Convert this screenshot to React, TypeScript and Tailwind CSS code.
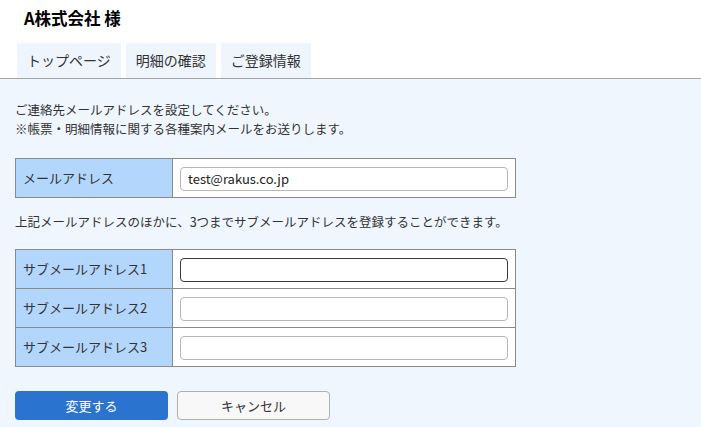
import { type ReactNode } from "react";

const font = { fontFamily: '"Noto Sans CJK JP", "Noto Sans", sans-serif' };

const tabs = ["トップページ", "明細の確認", "ご登録情報"];

const Row = ({ label, children, first }: { label: string; children: ReactNode; first?: boolean }) => (
  <tr className={first ? "" : "border-t border-[#8a8a8a]"}>
    <th className="w-[157px] bg-[#b3d6fc] border-r border-[#8a8a8a] text-left font-normal pl-[7px] text-[13px] text-[#333]">
      {label}
    </th>
    <td className="bg-white px-[7px] h-[39px]">{children}</td>
  </tr>
);

const Input = ({ value, focused }: { value?: string; focused?: boolean }) => (
  <input
    defaultValue={value}
    className={`w-full h-[24px] rounded-[4px] bg-white px-[7px] text-[13px] text-[#222] outline-none border ${
      focused ? "border-[#3a3a3a]" : "border-[#b8b8b8]"
    }`}
  />
);

export default function App() {
  return (
    <div className="w-[701px] h-[427px] bg-white overflow-hidden text-[#333]" style={font}>
      <div className="h-[43px] pl-[24px] pt-[6px] text-[16.5px] font-bold text-black">A株式会社 様</div>
      <div className="flex gap-[5px] pl-[17px] border-b border-[#a3a3a3]">
        {tabs.map((t) => (
          <div key={t} className="h-[35px] px-[10px] flex items-center bg-[#eef5fd] text-[14px] text-[#333]">
            {t}
          </div>
        ))}
      </div>
      <div className="bg-[#eff6fe] h-full px-[15px] pt-[21px]">
        <p className="text-[12.5px] leading-[19px]">ご連絡先メールアドレスを設定してください。</p>
        <p className="text-[12.5px] leading-[19px]">※帳票・明細情報に関する各種案内メールをお送りします。</p>
        <table className="mt-[20px] w-[501px] border border-[#8a8a8a] border-collapse">
          <tbody>
            <Row label="メールアドレス" first>
              <Input value="test@rakus.co.jp" />
            </Row>
          </tbody>
        </table>
        <p className="mt-[14px] text-[12.5px] leading-[19px]">
          上記メールアドレスのほかに、3つまでサブメールアドレスを登録することができます。
        </p>
        <table className="mt-[18px] w-[501px] border border-[#8a8a8a] border-collapse">
          <tbody>
            <Row label="サブメールアドレス1" first>
              <Input focused />
            </Row>
            <Row label="サブメールアドレス2">
              <Input />
            </Row>
            <Row label="サブメールアドレス3">
              <Input />
            </Row>
          </tbody>
        </table>
        <div className="flex gap-[9px] mt-[24px]">
          <button className="w-[153px] h-[29px] rounded-[4px] bg-[#2a74cf] text-white text-[13px]">変更する</button>
          <button className="w-[153px] h-[29px] rounded-[4px] bg-[#f8f8f8] border border-[#b0b0b0] text-[13px] text-[#333]">
            キャンセル
          </button>
        </div>
      </div>
    </div>
  );
}
